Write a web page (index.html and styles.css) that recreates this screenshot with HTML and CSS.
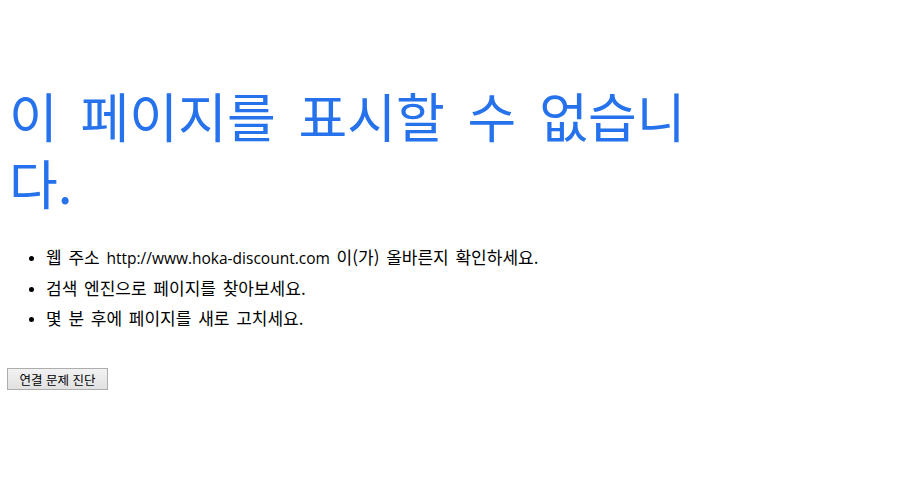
FILE: index.html
```html
<!DOCTYPE html>
<html lang="ko">
<head>
  <meta charset="UTF-8" />
  <meta name="viewport" content="width=device-width, initial-scale=1.0"/>
  <title>이 페이지를 표시할 수 없습니다.</title>
  <link rel="stylesheet" href="styles.css">
</head>
<body>
  <div class="content">
    <h1 class="main-title">이 페이지를 표시할 수 없습니다.</h1>

    <ul class="tasks">
      <li>웹 주소 <span class="url">http://www.hoka-discount.com</span> 이(가) 올바른지 확인하세요.</li>
      <li>검색 엔진으로 페이지를 찾아보세요.</li>
      <li>몇 분 후에 페이지를 새로 고치세요.</li>
    </ul>

    <button class="diagnose-btn" type="button">연결 문제 진단</button>
  </div>
</body>
</html>
```

FILE: styles.css
```css
* {
  box-sizing: border-box;
  margin: 0;
  padding: 0;
}

body {
  background-color: #fff;
  font-family: 'Noto Sans CJK KR', 'Open Sans', sans-serif;
  color: #000;
}

.content {
  max-width: 720px;
  padding: 82px 0 0 7px;
}

.main-title {
  font-family: 'Noto Sans CJK KR', sans-serif;
  font-weight: 400;
  font-size: 53px;
  line-height: 67px;
  word-spacing: 8px;
  color: #2672ec;
  padding-left: 2px;
}

.tasks {
  margin: 26px 0 0 39px;
  font-size: 17px;
  line-height: 30px;
  word-spacing: 2px;
}

.tasks li::marker {
  font-size: 13px;
}

.tasks .url {
  font-family: 'Open Sans', sans-serif;
  font-size: 15.5px;
  word-spacing: 0;
}

.diagnose-btn {
  display: block;
  margin-top: 35px;
  width: 101px;
  height: 22px;
  font-family: 'Noto Sans CJK KR', sans-serif;
  font-size: 12.5px;
  color: #000;
  background: linear-gradient(#f2f2f2, #e1e1e1);
  border: 1px solid #adadad;
  border-radius: 0;
}
```
